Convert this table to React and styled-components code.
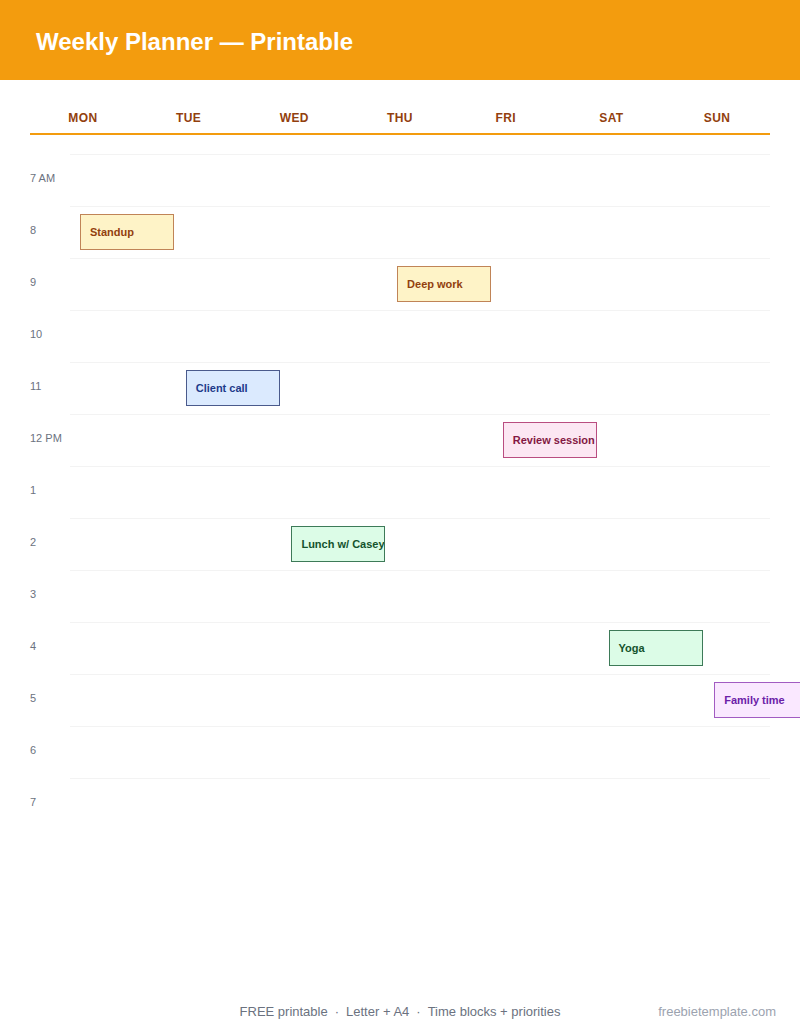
import React from 'react';
import styled, {createGlobalStyle} from 'styled-components';

const GlobalStyle = createGlobalStyle`
  html, body {
    margin: 0;
    padding: 0;
    overflow: hidden;
    background: #ffffff;
    font-family: "Liberation Sans", Arial, sans-serif;
  }
`;

const DAYS = ['MON', 'TUE', 'WED', 'THU', 'FRI', 'SAT', 'SUN'];
const HOURS = ['7 AM', '8', '9', '10', '11', '12 PM', '1', '2', '3', '4', '5', '6', '7'];

const TONES = {
    amber: {bg: '#fef3c7', border: '#c08457', text: '#92400e'},
    blue: {bg: '#dbeafe', border: '#4a5a8c', text: '#1e3a8a'},
    pink: {bg: '#fce7f3', border: '#b94d80', text: '#831843'},
    green: {bg: '#dcfce7', border: '#3d7a58', text: '#14532d'},
    purple: {bg: '#fae8ff', border: '#a25cc2', text: '#6b21a8'},
};

// hour index -> [day index, label, tone]
const EVENTS = {
    1: [0, 'Standup', 'amber'],
    2: [3, 'Deep work', 'amber'],
    4: [1, 'Client call', 'blue'],
    5: [4, 'Review session', 'pink'],
    7: [2, 'Lunch w/ Casey', 'green'],
    9: [5, 'Yoga', 'green'],
    10: [6, 'Family time', 'purple'],
};

const Page = styled.div`
  width: 800px;
  min-height: 1035px;
  display: flex;
  flex-direction: column;
`;

const Banner = styled.header`
  height: 80px;
  background: #f39c0e;
  display: flex;
  align-items: center;
  padding: 3px 36px 0;
  box-sizing: border-box;
`;

const Title = styled.h1`
  margin: 0;
  color: #ffffff;
  font-size: 24px;
  font-weight: 700;
`;

const Sheet = styled.main`
  padding: 20px 30px 0;
`;

const DayBar = styled.div`
  display: grid;
  grid-template-columns: repeat(7, 1fr);
  padding: 11px 0 8px;
  border-bottom: 2px solid #f39c0e;
`;

const DayName = styled.div`
  text-align: center;
  font-size: 12px;
  line-height: 14px;
  font-weight: 700;
  letter-spacing: 0.4px;
  color: #92400e;
`;

const Hours = styled.div`
  margin-top: 19px;
`;

const Row = styled.div`
  position: relative;
  height: 52px;
  display: grid;
  grid-template-columns: 50px repeat(7, calc(740px / 7));
  align-items: start;

  &::before {
    content: '';
    position: absolute;
    left: 40px;
    right: 0;
    top: 0;
    height: 1px;
    background: #f3f3f3;
  }
`;

const HourLabel = styled.div`
  grid-column: 1;
  padding-top: 18px;
  font-size: 11px;
  line-height: 13px;
  color: #6b7280;
  white-space: nowrap;
`;

const Block = styled.div`
  grid-column: ${p => p.$col + 2};
  grid-row: 1;
  margin-top: 8px;
  width: 94px;
  height: 36px;
  box-sizing: border-box;
  display: flex;
  align-items: center;
  padding-left: 9px;
  background: ${p => p.$tone.bg};
  border: 1px solid ${p => p.$tone.border};
  color: ${p => p.$tone.text};
  font-size: 11px;
  font-weight: 700;
  white-space: nowrap;
  overflow: hidden;
`;

const Footer = styled.footer`
  margin-top: auto;
  position: relative;
  height: 46px;
  padding-top: 15px;
  box-sizing: border-box;
  display: flex;
  justify-content: center;
  font-size: 13px;
  line-height: 16px;
  color: #6b7280;
`;

const Dot = styled.span`
  margin: 0 7px;
`;

const Site = styled.span`
  position: absolute;
  right: 24px;
  top: 15px;
  color: #9ca3af;
`;

export default function App() {
    return (
        <Page>
            <GlobalStyle/>
            <Banner>
                <Title>Weekly Planner — Printable</Title>
            </Banner>
            <Sheet>
                <DayBar>
                    {DAYS.map(d => <DayName key={d}>{d}</DayName>)}
                </DayBar>
                <Hours>
                    {HOURS.map((h, i) => {
                        const ev = EVENTS[i];
                        return (
                            <Row key={h}>
                                <HourLabel>{h}</HourLabel>
                                {ev && <Block $col={ev[0]} $tone={TONES[ev[2]]}>{ev[1]}</Block>}
                            </Row>
                        );
                    })}
                </Hours>
            </Sheet>
            <Footer>
                <span>FREE printable<Dot>·</Dot>Letter + A4<Dot>·</Dot>Time blocks + priorities</span>
                <Site>freebietemplate.com</Site>
            </Footer>
        </Page>
    );
}
